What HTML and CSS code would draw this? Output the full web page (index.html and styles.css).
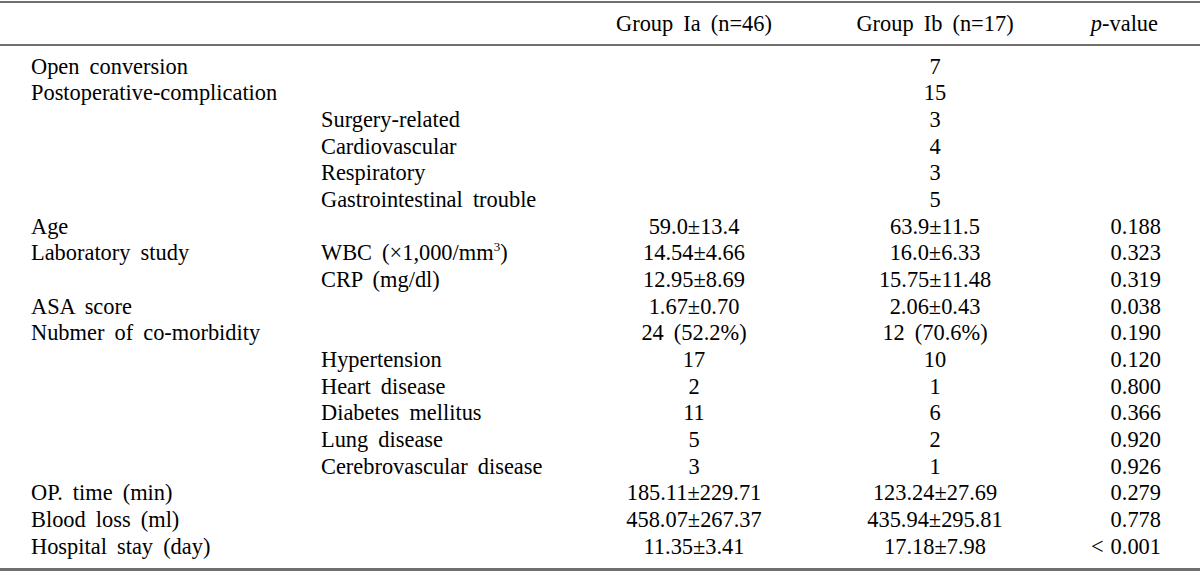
FILE: index.html
```html
<!DOCTYPE html>
<html lang="en">
<head>
<meta charset="utf-8">
<title>Table</title>
<link rel="stylesheet" href="styles.css">
</head>
<body>
<table class="data">
  <colgroup>
    <col class="c-label">
    <col class="c-sub">
    <col class="c-ia">
    <col class="c-ib">
    <col class="c-p">
  </colgroup>
  <thead>
    <tr>
      <th class="label"></th>
      <th class="sub"></th>
      <th class="ia">Group Ia (n=46)</th>
      <th class="ib">Group Ib (n=17)</th>
      <th class="p"><i>p</i>-value</th>
    </tr>
  </thead>
  <tbody>
    <tr><td class="label">Open conversion</td><td class="sub"></td><td class="ia"></td><td class="ib">7</td><td class="p"></td></tr>
    <tr><td class="label">Postoperative-complication</td><td class="sub"></td><td class="ia"></td><td class="ib">15</td><td class="p"></td></tr>
    <tr><td class="label"></td><td class="sub">Surgery-related</td><td class="ia"></td><td class="ib">3</td><td class="p"></td></tr>
    <tr><td class="label"></td><td class="sub">Cardiovascular</td><td class="ia"></td><td class="ib">4</td><td class="p"></td></tr>
    <tr><td class="label"></td><td class="sub">Respiratory</td><td class="ia"></td><td class="ib">3</td><td class="p"></td></tr>
    <tr><td class="label"></td><td class="sub">Gastrointestinal trouble</td><td class="ia"></td><td class="ib">5</td><td class="p"></td></tr>
    <tr><td class="label">Age</td><td class="sub"></td><td class="ia">59.0±13.4</td><td class="ib">63.9±11.5</td><td class="p">0.188</td></tr>
    <tr><td class="label">Laboratory study</td><td class="sub">WBC (×1,000/mm<sup>3</sup>)</td><td class="ia">14.54±4.66</td><td class="ib">16.0±6.33</td><td class="p">0.323</td></tr>
    <tr><td class="label"></td><td class="sub">CRP (mg/dl)</td><td class="ia">12.95±8.69</td><td class="ib">15.75±11.48</td><td class="p">0.319</td></tr>
    <tr><td class="label">ASA score</td><td class="sub"></td><td class="ia">1.67±0.70</td><td class="ib">2.06±0.43</td><td class="p">0.038</td></tr>
    <tr><td class="label">Nubmer of co-morbidity</td><td class="sub"></td><td class="ia">24 (52.2%)</td><td class="ib">12 (70.6%)</td><td class="p">0.190</td></tr>
    <tr><td class="label"></td><td class="sub">Hypertension</td><td class="ia">17</td><td class="ib">10</td><td class="p">0.120</td></tr>
    <tr><td class="label"></td><td class="sub">Heart disease</td><td class="ia">2</td><td class="ib">1</td><td class="p">0.800</td></tr>
    <tr><td class="label"></td><td class="sub">Diabetes mellitus</td><td class="ia">11</td><td class="ib">6</td><td class="p">0.366</td></tr>
    <tr><td class="label"></td><td class="sub">Lung disease</td><td class="ia">5</td><td class="ib">2</td><td class="p">0.920</td></tr>
    <tr><td class="label"></td><td class="sub">Cerebrovascular disease</td><td class="ia">3</td><td class="ib">1</td><td class="p">0.926</td></tr>
    <tr><td class="label">OP. time (min)</td><td class="sub"></td><td class="ia">185.11±229.71</td><td class="ib">123.24±27.69</td><td class="p">0.279</td></tr>
    <tr><td class="label">Blood loss (ml)</td><td class="sub"></td><td class="ia">458.07±267.37</td><td class="ib">435.94±295.81</td><td class="p">0.778</td></tr>
    <tr><td class="label">Hospital stay (day)</td><td class="sub"></td><td class="ia">11.35±3.41</td><td class="ib">17.18±7.98</td><td class="p"><span class="lt">&lt;</span>0.001</td></tr>
  </tbody>
</table>
</body>
</html>
```

FILE: styles.css
```css
html, body {
  margin: 0;
  padding: 0;
  background: #ffffff;
}

body {
  font-family: "Liberation Serif", "Times New Roman", serif;
  font-size: 22.4px;
  color: #000000;
  word-spacing: 4.5px;
}

.data {
  width: 1200px;
  margin-top: 1px;
  border-collapse: collapse;
  table-layout: fixed;
}

.c-label { width: 321px; }
.c-sub { width: 279px; }
.c-ia { width: 188px; }
.c-ib { width: 294px; }
.c-p { width: 118px; }

.data th,
.data td {
  padding: 0;
  line-height: 26.67px;
  font-weight: normal;
  white-space: nowrap;
  vertical-align: baseline;
}

.data thead tr {
  border-top: 2px solid #6f6f6f;
  border-bottom: 2px solid #6f6f6f;
}

.data thead th {
  padding-top: 8px;
  padding-bottom: 6px;
}

.data tbody tr:first-child td {
  padding-top: 8px;
}

.data tbody tr:last-child td {
  padding-bottom: 8px;
}

.data tbody tr:last-child {
  border-bottom: 3px solid #6f6f6f;
}

.label {
  text-align: left;
  padding-left: 31px !important;
}

.sub {
  text-align: left;
}

.ia,
.ib {
  text-align: center;
}

.p {
  text-align: right;
  padding-right: 39px !important;
}

.data thead .p {
  padding-right: 42px !important;
}

sup {
  font-size: 13px;
  line-height: 0;
  vertical-align: 9px;
}

.lt {
  margin-right: 7px;
}
```
